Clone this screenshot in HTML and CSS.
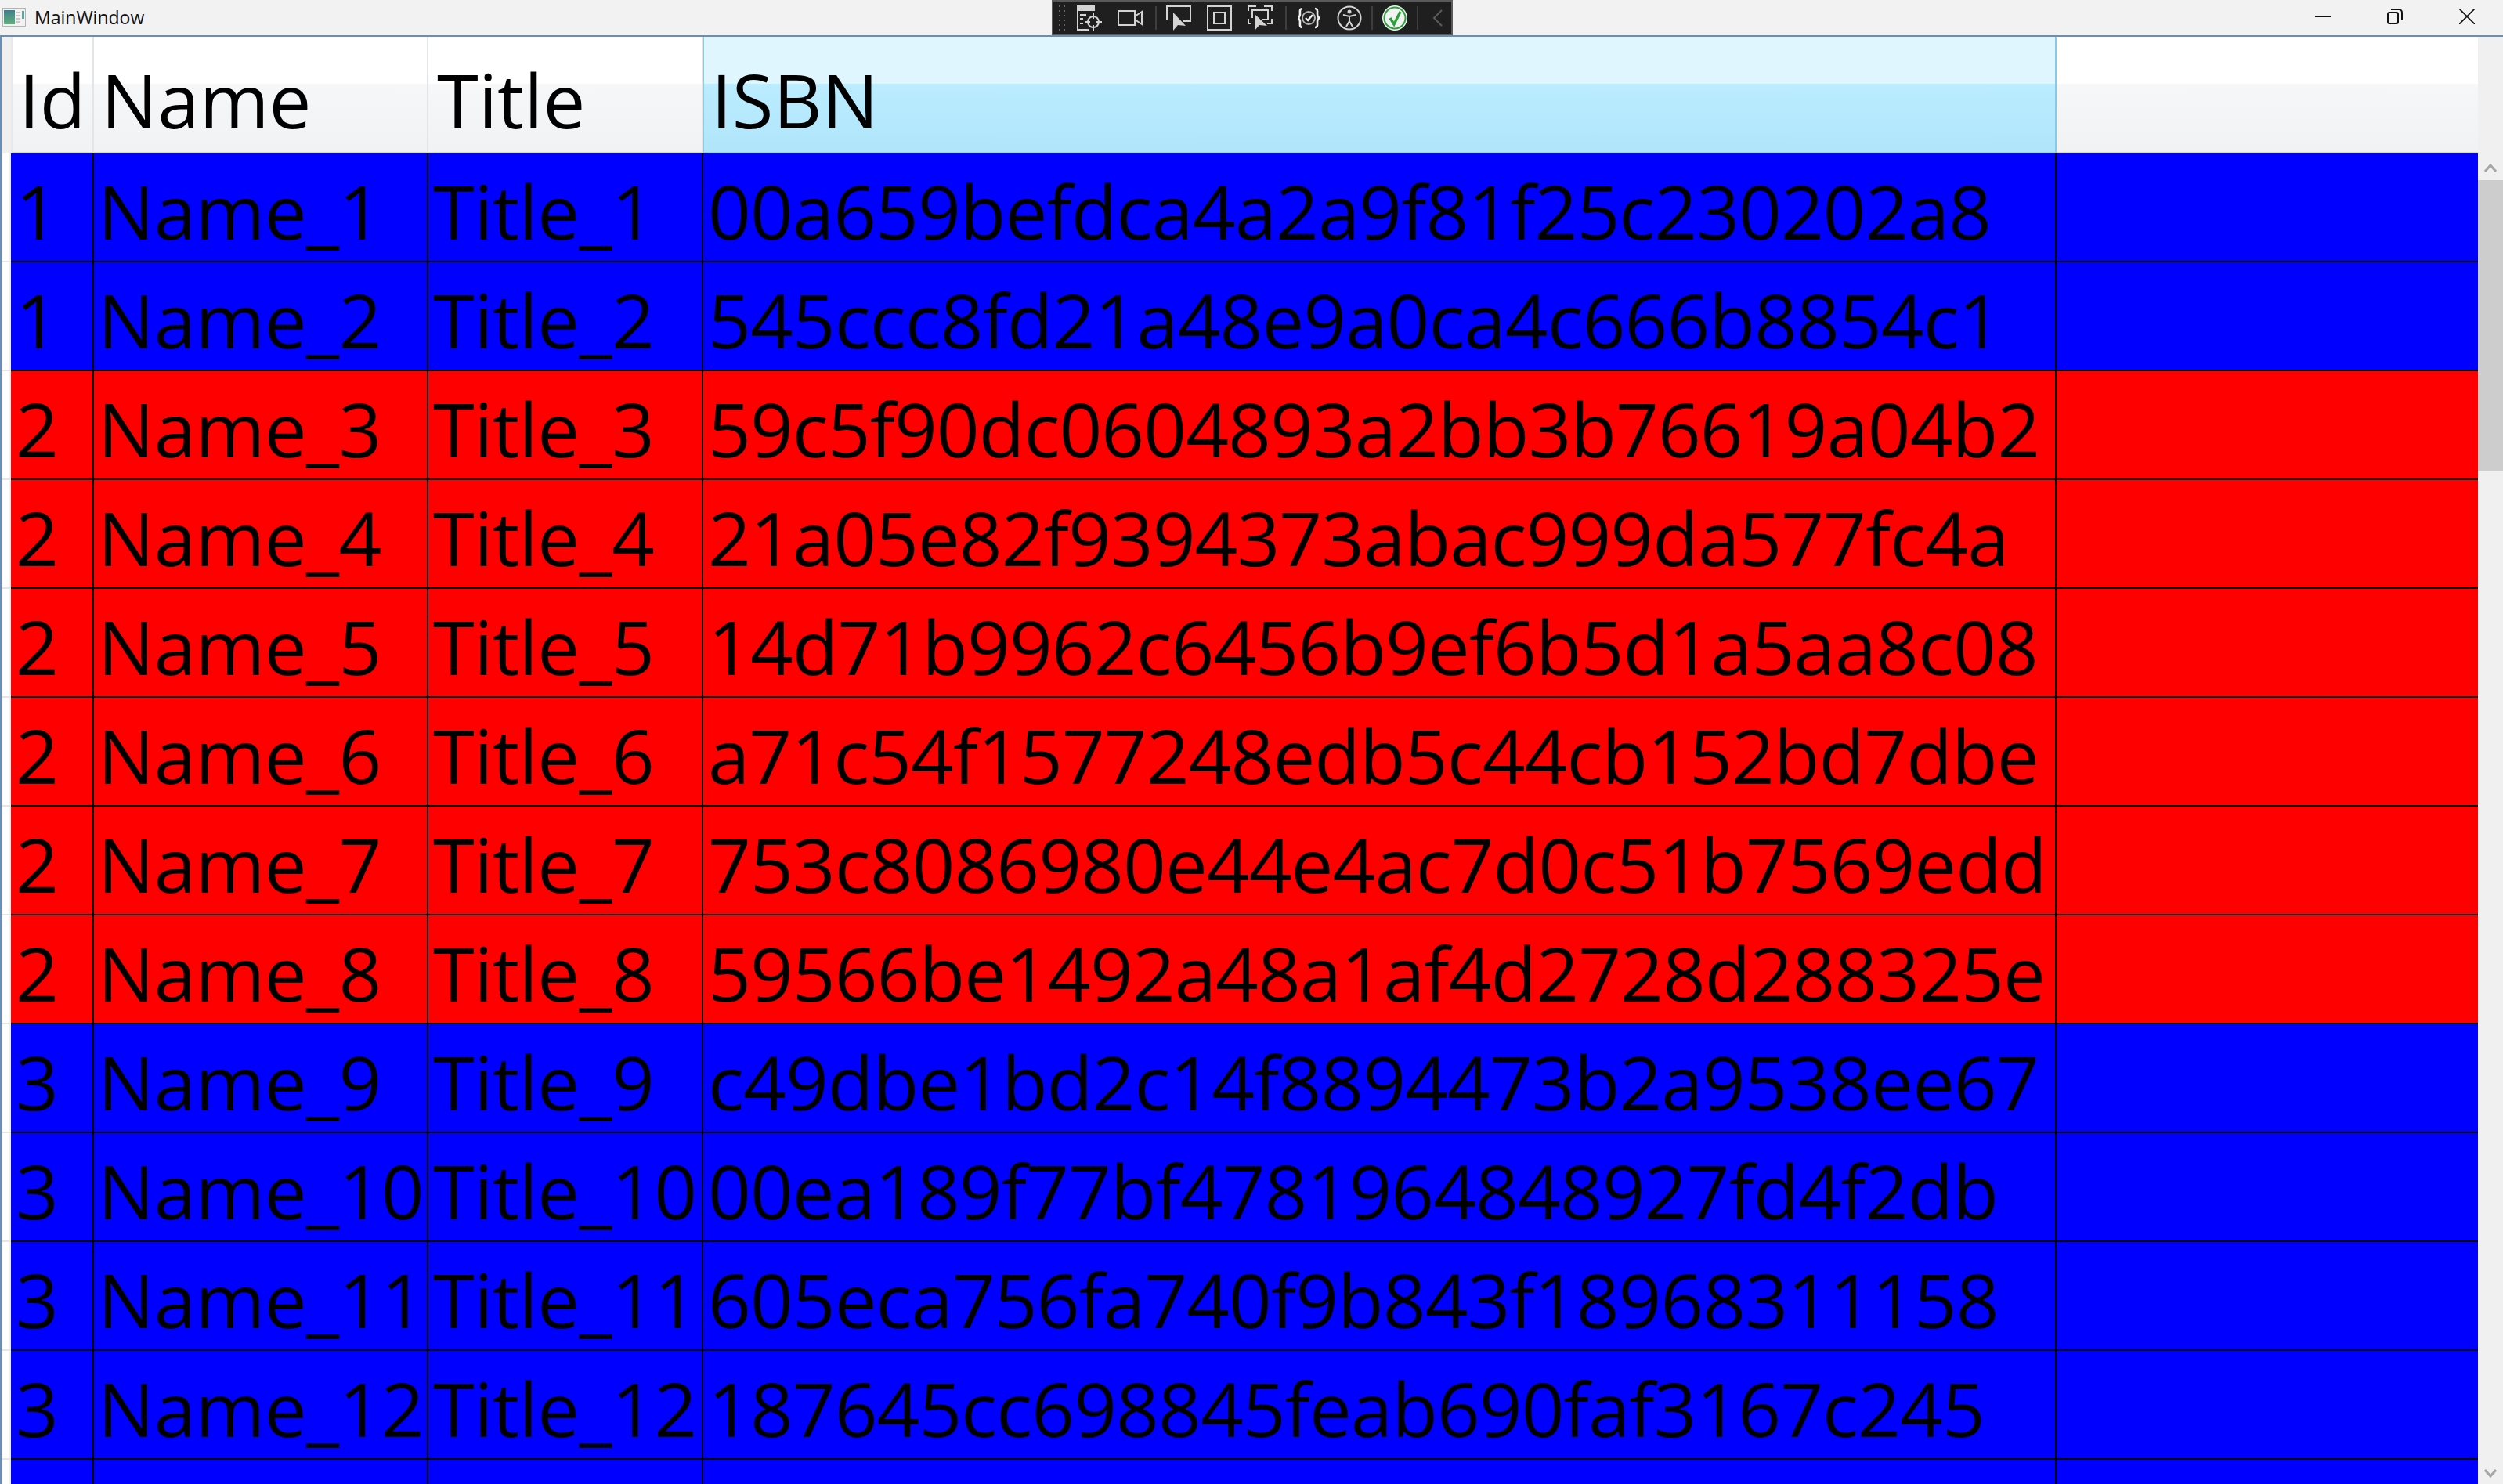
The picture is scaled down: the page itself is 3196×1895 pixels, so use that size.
FILE: index.html
```html
<!DOCTYPE html>
<html lang="en">
<head>
    <meta charset="UTF-8">
    <title>MainWindow</title>
    <link rel="stylesheet" href="styles.css">
</head>
<body>
    <div class="window">
        <div class="titlebar">
            <svg class="app-icon" width="30" height="24" viewBox="0 0 30 24">
                <defs>
                    <linearGradient id="panel" x1="0" y1="0" x2="0" y2="1">
                        <stop offset="0" stop-color="#3f7f8f"/>
                        <stop offset="1" stop-color="#5fb07a"/>
                    </linearGradient>
                </defs>
                <rect x="0.5" y="0.5" width="29" height="23" fill="#f2f2f2" stroke="#b4b4b4"/>
                <rect x="2" y="3" width="14" height="18" fill="url(#panel)"/>
                <path d="M18 6h5M18 10h5M18 14h5M18 18h5" stroke="#c8c8c8" stroke-width="2"/>
                <rect x="25" y="4" width="3" height="10" fill="#5aa5a0"/>
            </svg>
            <span class="title">MainWindow</span>
            <div class="win-buttons">
                <svg width="20" height="20" viewBox="0 0 20 20"><path d="M0 10h20" stroke="#111" stroke-width="2"/></svg>
                <svg width="20" height="20" viewBox="0 0 20 20" fill="none" stroke="#111" stroke-width="2"><rect x="1" y="5" width="13" height="14" rx="2"/><path d="M5 1h10a4 4 0 0 1 4 4v10"/></svg>
                <svg width="20" height="20" viewBox="0 0 20 20"><path d="M0 0l20 20M20 0L0 20" stroke="#111" stroke-width="1.6"/></svg>
            </div>
        </div>

        <!-- debug toolbar sits over the title bar -->
        <div class="dbg-toolbar">
            <div class="gripper"></div>
            <svg class="dbg-icon" viewBox="0 0 32 32" fill="none" stroke="#d4d4d4" stroke-width="2">
                <path d="M0 0h22v6H0z" fill="#d4d4d4"/>
                <path d="M1 6v25h14M4 12h8M4 17h4M4 23h4"/>
                <circle cx="21" cy="21" r="7"/>
                <path d="M21 10v7M21 25v7M10 21h7M25 21h7"/>
            </svg>
            <svg class="dbg-icon" viewBox="0 0 32 32" fill="none" stroke="#d4d4d4" stroke-width="2">
                <rect x="1" y="7" width="21" height="18"/>
                <path d="M22 14l9-6v16l-9-6"/>
            </svg>
            <div class="sep"></div>
            <svg class="dbg-icon" viewBox="0 0 32 32" fill="none" stroke="#d4d4d4" stroke-width="2">
                <path d="M1 18V1h30v19H21"/>
                <path d="M9 9v23l6-7 10 1z" fill="#d4d4d4" stroke="none"/>
            </svg>
            <svg class="dbg-icon" viewBox="0 0 32 32" fill="none" stroke="#d4d4d4" stroke-width="2">
                <rect x="1" y="1" width="30" height="30"/>
                <rect x="9" y="9" width="14" height="14"/>
            </svg>
            <svg class="dbg-icon" viewBox="0 0 32 32" fill="none" stroke="#d4d4d4" stroke-width="2">
                <path d="M1 7V1h10M21 1h10v6M31 17v6H25M1 17v6h4"/>
                <path d="M6 16V6h20v12h-8"/>
                <path d="M9 11v21l6-7 10 1z" fill="#d4d4d4" stroke="none"/>
            </svg>
            <div class="sep"></div>
            <svg class="dbg-icon" viewBox="0 0 32 32" fill="none" stroke="#f0f0f0" stroke-width="2.6">
                <path d="M8 4C4 4 5 8 5 11c0 3-2 5-3 5 1 0 3 2 3 5 0 3-1 7 3 7"/>
                <path d="M24 4c4 0 3 4 3 7 0 3 2 5 3 5-1 0-3 2-3 5 0 3 1 7-3 7"/>
                <circle cx="16" cy="16" r="8" stroke="#b4b4b4" stroke-width="2"/>
                <path d="M12 16l3 3 6-7" stroke-width="2.4"/>
            </svg>
            <svg class="dbg-icon" viewBox="0 0 32 32" fill="none" stroke="#d4d4d4" stroke-width="2">
                <circle cx="16" cy="16" r="14.5"/>
                <circle cx="16" cy="8" r="2.5" fill="#d4d4d4" stroke="none"/>
                <path d="M8 12l8 2 8-2M16 14v6M16 20l-4 7M16 20l4 7"/>
            </svg>
            <div class="sep tight"></div>
            <svg class="dbg-icon" viewBox="0 0 32 32" fill="none">
                <circle cx="16" cy="16" r="16" fill="#f2f2f2"/>
                <circle cx="16" cy="16" r="13.5" stroke="#2aa13c" stroke-width="2"/>
                <path d="M10 16l5 8 8-16" stroke="#2aa13c" stroke-width="3.4"/>
            </svg>
            <div class="sep tight"></div>
            <svg class="dbg-chevron" width="14" height="22" viewBox="0 0 14 22" fill="none"><path d="M12 1L2 11l10 10" stroke="#5c5c5c" stroke-width="2"/></svg>
        </div>

        <div class="body-area">
            <div class="gutter">
                <div class="gutter-head"></div>
                <div class="gutter-rows"></div>
            </div>
            <table class="grid">
                <thead>
                    <tr>
                        <th class="col-id">Id</th>
                        <th class="col-name">Name</th>
                        <th class="col-title">Title</th>
                        <th class="col-isbn hot">ISBN</th>
                        <th class="col-fill"></th>
                    </tr>
                </thead>
                <tbody>
                    <tr class="blue"><td>1</td><td>Name_1</td><td>Title_1</td><td>00a659befdca4a2a9f81f25c230202a8</td><td></td></tr>
                    <tr class="blue"><td>1</td><td>Name_2</td><td>Title_2</td><td>545ccc8fd21a48e9a0ca4c666b8854c1</td><td></td></tr>
                    <tr class="red"><td>2</td><td>Name_3</td><td>Title_3</td><td>59c5f90dc0604893a2bb3b76619a04b2</td><td></td></tr>
                    <tr class="red"><td>2</td><td>Name_4</td><td>Title_4</td><td>21a05e82f9394373abac999da577fc4a</td><td></td></tr>
                    <tr class="red"><td>2</td><td>Name_5</td><td>Title_5</td><td>14d71b9962c6456b9ef6b5d1a5aa8c08</td><td></td></tr>
                    <tr class="red"><td>2</td><td>Name_6</td><td>Title_6</td><td>a71c54f1577248edb5c44cb152bd7dbe</td><td></td></tr>
                    <tr class="red"><td>2</td><td>Name_7</td><td>Title_7</td><td>753c8086980e44e4ac7d0c51b7569edd</td><td></td></tr>
                    <tr class="red"><td>2</td><td>Name_8</td><td>Title_8</td><td>59566be1492a48a1af4d2728d288325e</td><td></td></tr>
                    <tr class="blue"><td>3</td><td>Name_9</td><td>Title_9</td><td>c49dbe1bd2c14f8894473b2a9538ee67</td><td></td></tr>
                    <tr class="blue"><td>3</td><td>Name_10</td><td>Title_10</td><td>00ea189f77bf4781964848927fd4f2db</td><td></td></tr>
                    <tr class="blue"><td>3</td><td>Name_11</td><td>Title_11</td><td>605eca756fa740f9b843f18968311158</td><td></td></tr>
                    <tr class="blue"><td>3</td><td>Name_12</td><td>Title_12</td><td>187645cc698845feab690faf3167c245</td><td></td></tr>
                    <tr class="blue"><td></td><td></td><td></td><td></td><td></td></tr>
                </tbody>
            </table>
            <div class="scrollbar">
                <div class="scroll-up">
                    <svg width="16" height="11" viewBox="0 0 16 11" fill="none"><path d="M1 10l7-8 7 8" stroke="#a6a6a6" stroke-width="3"/></svg>
                </div>
                <div class="scroll-thumb"></div>
                <div class="scroll-down">
                    <svg width="16" height="11" viewBox="0 0 16 11" fill="none"><path d="M1 1l7 8 7-8" stroke="#a6a6a6" stroke-width="3"/></svg>
                </div>
            </div>
        </div>
    </div>
</body>
</html>
```

FILE: styles.css
```css
* {
    box-sizing: border-box;
}

html, body {
    margin: 0;
    height: 100%;
    overflow: hidden;
}

body {
    font-family: 'Open Sans', 'Noto Sans', sans-serif;
    color: #000;
    background: #fff;
}

.window {
    position: relative;
    height: 1895px;
    display: flex;
    flex-direction: column;
    overflow: hidden;
}

.titlebar {
    height: 47px;
    flex: none;
    display: flex;
    align-items: flex-start;
    background: #f2f2f2;
    border-bottom: 2px solid #6b8fb4;
}

.app-icon {
    margin: 10px 0 0 3px;
}

.title {
    margin: 6px 0 0 11px;
    font-size: 23px;
    line-height: 32px;
    color: #111;
}

.win-buttons {
    margin: 11px 36px 0 auto;
    display: flex;
    gap: 72px;
}

.dbg-toolbar {
    position: absolute;
    left: 1343px;
    top: 0;
    width: 512px;
    height: 45px;
    display: flex;
    align-items: center;
    background: #1f1f1f;
    border: 2px solid #5a5a5a;
    border-bottom-width: 1px;
}

.gripper {
    width: 12px;
    height: 36px;
    margin: 0 13px 0 5px;
    background-image: radial-gradient(#6a6a6a 1px, transparent 1.5px);
    background-size: 6px 6px;
}

.dbg-icon {
    width: 32px;
    height: 32px;
    margin-right: 20px;
}

.sep {
    width: 2px;
    height: 30px;
    margin: 0 12px 0 -4px;
    background: #3e3e3e;
}

.sep.tight {
    margin-left: -8px;
}

.dbg-chevron {
    margin-left: 6px;
}

.body-area {
    flex: 1;
    display: flex;
    min-height: 0;
    border-left: 2px solid #6b8fb4;
}

.gutter {
    width: 12px;
    flex: none;
    display: flex;
    flex-direction: column;
}

.gutter-head {
    height: 149px;
    background: #f0f0f0;
}

.gutter-rows {
    flex: 1;
    background:
        repeating-linear-gradient(to bottom, transparent 0, transparent 137px, #e6e6e6 137px, #e6e6e6 139px),
        linear-gradient(to right, #f0f0f0 0, #fff 20%, #fff 70%, #e8e8e8 100%);
}

.grid {
    width: 3150px;
    flex: none;
    table-layout: fixed;
    border-collapse: separate;
    border-spacing: 0;
    align-self: flex-start;
}

.col-id { width: 106px; }
.col-name { width: 427px; }
.col-title { width: 351px; }
.col-isbn { width: 1728px; }

th {
    height: 149px;
    padding: 20px 0 0 9px;
    text-align: left;
    font-size: 96px;
    font-weight: 400;
    line-height: 120px;
    vertical-align: top;
    overflow: hidden;
    white-space: nowrap;
    background: linear-gradient(to bottom, #fff 0, #fff 60px, #f6f7f9 60px, #f1f2f4 100%);
    border-right: 2px solid #e4e5e6;
    border-bottom: 2px solid #d5d5d5;
}

th.col-id {
    padding-left: 8px;
    border-left: 2px solid #e9e9e9;
}

th.col-title {
    padding-left: 11px;
}

th.hot {
    padding-left: 9px;
    background: linear-gradient(to bottom, #e0f6ff 0, #e0f6ff 60px, #bbecff 60px, #b0e5fa 100%);
    border-left: 1px solid #7fd0ee;
    border-right: 2px solid #85cbe8;
    border-bottom-color: #98d2ea;
}

th.col-fill {
    border-right: 0;
}

td {
    height: 139px;
    padding: 13px 0 0 6px;
    font-size: 96px;
    line-height: 120px;
    vertical-align: top;
    overflow: hidden;
    white-space: nowrap;
    border-right: 2px solid #000;
    border-bottom: 2px solid #000;
}

td:nth-child(2) {
    padding-left: 5px;
    letter-spacing: -0.6px;
}

td:nth-child(3) {
    letter-spacing: -0.6px;
}

td:nth-child(4) {
    letter-spacing: -1px;
}

td:last-child {
    border-right: 0;
}

.blue td {
    background: #0000ff;
}

.red td {
    background: #ff0000;
}

.scrollbar {
    flex: 1;
    display: flex;
    flex-direction: column;
    align-items: center;
    background: #f0f0f0;
}

.scroll-up {
    height: 183px;
    width: 100%;
    display: flex;
    justify-content: center;
    padding-top: 162px;
    background: #f0f0f0;
}

.scroll-thumb {
    width: 100%;
    height: 371px;
    background: #cdcdcd;
}

.scroll-down {
    margin-top: auto;
    padding-bottom: 3px;
}
```
